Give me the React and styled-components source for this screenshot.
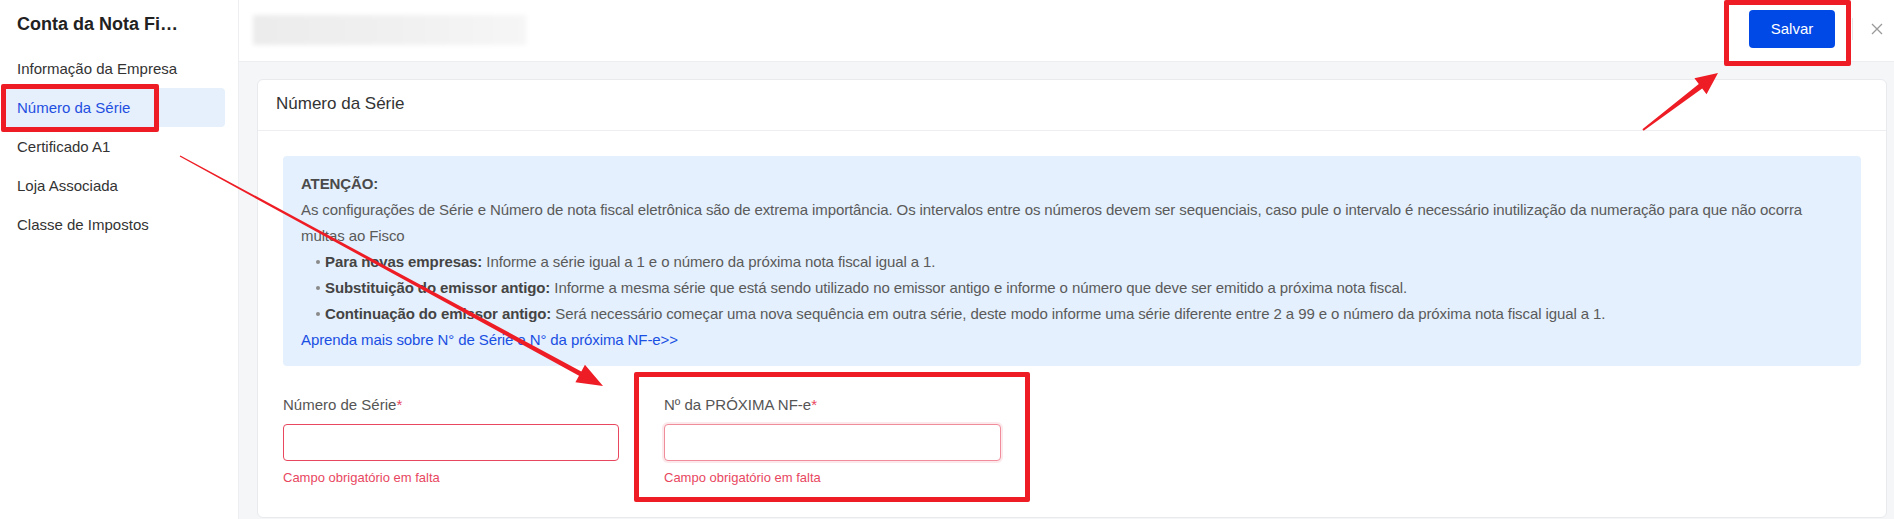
import React from "react";
import styled, { createGlobalStyle } from "styled-components";

const GlobalStyle = createGlobalStyle`
  * { box-sizing: border-box; }
  body {
    margin: 0;
    font-family: "Liberation Sans", Arial, sans-serif;
    background: #fff;
  }
`;

const menu = [
  "Informação da Empresa",
  "Número da Série",
  "Certificado A1",
  "Loja Associada",
  "Classe de Impostos",
];

const Page = styled.div`
  position: relative;
  display: flex;
  height: 519px;
  overflow: hidden;
`;

const Sidebar = styled.aside`
  width: 239px;
  flex: none;
  border-right: 1px solid #eceef1;
  background: #fff;
  padding: 0 13px 0 5px;
`;

const SideTitle = styled.h1`
  margin: 0;
  height: 49px;
  padding: 12px 0 0 12px;
  font-size: 18px;
  line-height: 24px;
  font-weight: bold;
  color: #222;
  white-space: nowrap;
`;

const MenuItem = styled.div`
  position: relative;
  height: 39px;
  display: flex;
  align-items: center;
  padding-left: 12px;
  font-size: 15px;
  border-radius: 4px;
  color: ${(p) => (p.$active ? "#1f4fe0" : "#333")};
  background: ${(p) => (p.$active ? "#e6f0fd" : "transparent")};
`;

const Main = styled.main`
  flex: 1;
  display: flex;
  flex-direction: column;
  background: #f5f6f8;
  min-width: 0;
`;

const TopBar = styled.header`
  height: 62px;
  flex: none;
  background: #fff;
  border-bottom: 1px solid #eceef1;
  display: flex;
  align-items: center;
  justify-content: space-between;
  padding: 0 11px 4px 14px;
`;

const BlurTitle = styled.div`
  width: 273px;
  height: 30px;
  margin-top: 3px;
  background: linear-gradient(90deg, #ececec, #f0f0f0 50%, #f6f6f6);
  filter: blur(2px);
`;

const Actions = styled.div`
  display: flex;
  align-items: center;
`;

const SaveButton = styled.button`
  position: relative;
  width: 86px;
  height: 38px;
  border: none;
  border-radius: 4px;
  background: #0149e6;
  color: #fff;
  font-family: inherit;
  font-size: 15px;
`;

const Divider = styled.span`
  width: 1px;
  height: 22px;
  background: #e6e6e6;
  margin: 0 18px 0 17px;
`;

const Close = styled.svg`
  width: 12px;
  height: 12px;
  display: block;
`;

const Content = styled.div`
  flex: 1;
  padding: 17px 7px 0 18px;
`;

const Card = styled.section`
  background: #fff;
  border: 1px solid #e8eaed;
  border-radius: 6px;
  height: 439px;
`;

const CardHead = styled.div`
  height: 51px;
  display: flex;
  align-items: center;
  padding: 0 18px 2px;
  border-bottom: 1px solid #eceef1;
  font-size: 17px;
  color: #333;
`;

const CardBody = styled.div`
  padding: 25px 25px 0;
`;

const Alert = styled.div`
  background: #e4f0fd;
  border-radius: 4px;
  padding: 15px 18px 13px;
  font-size: 15px;
  letter-spacing: -0.1px;
  line-height: 26px;
  color: #5a5a5a;
`;

const AlertTitle = styled.div`
  font-weight: bold;
  color: #4a4a4a;
`;

const Bullets = styled.ul`
  margin: 0;
  padding: 0;
  list-style: none;
`;

const Bullet = styled.li`
  position: relative;
  padding-left: 24px;
  &::before {
    content: "";
    position: absolute;
    left: 15px;
    top: 11px;
    width: 4px;
    height: 4px;
    border-radius: 50%;
    background: #8a8a8a;
  }
  b {
    color: #444;
  }
`;

const Link = styled.a`
  color: #1a4fe3;
  text-decoration: none;
`;

const Form = styled.div`
  display: grid;
  grid-template-columns: 336px 337px;
  column-gap: 45px;
  padding-top: 28px;
`;

const Field = styled.div`
  position: relative;
`;

const Label = styled.div`
  font-size: 15px;
  line-height: 22px;
  color: #555;
  margin-bottom: 8px;
  span {
    color: #e8475f;
  }
`;

const Input = styled.input`
  display: block;
  width: 100%;
  height: 37px;
  border: 1px solid ${(p) => (p.$focus ? "#f08c9c" : "#e8475f")};
  box-shadow: ${(p) => (p.$focus ? "0 0 0 2px rgba(232, 71, 95, 0.12)" : "none")};
  border-radius: 4px;
  outline: none;
  background: #fff;
`;

const Error = styled.div`
  font-size: 13px;
  line-height: 18px;
  margin-top: 8px;
  color: #e8475f;
`;

const Highlight = styled.span`
  position: absolute;
  inset: ${(p) => p.$inset};
  border: 5px solid #ee1d25;
  border-radius: 2px;
  pointer-events: none;
`;

const Arrows = styled.svg`
  position: absolute;
  left: 0;
  top: 0;
  pointer-events: none;
`;

function arrow(tail, tip, head, half, t0, t1) {
  const dx = tip[0] - tail[0];
  const dy = tip[1] - tail[1];
  const len = Math.hypot(dx, dy);
  const u = [dx / len, dy / len];
  const n = [-u[1], u[0]];
  const b = [tip[0] - head * u[0], tip[1] - head * u[1]];
  const p = (o, k) => `${o[0] + k * n[0]},${o[1] + k * n[1]}`;
  return [
    p(tail, -t0),
    p(b, -t1),
    p(b, -half),
    `${tip[0]},${tip[1]}`,
    p(b, half),
    p(b, t1),
    p(tail, t0),
  ].join(" ");
}

export default function App() {
  return (
    <>
      <GlobalStyle />
      <Page>
        <Sidebar>
          <SideTitle>Conta da Nota Fi…</SideTitle>
          {menu.map((m, i) => (
            <MenuItem key={m} $active={i === 1}>
              {m}
              {i === 1 && <Highlight $inset="-4px auto -5px -4px" style={{ width: 158 }} />}
            </MenuItem>
          ))}
        </Sidebar>
        <Main>
          <TopBar>
            <BlurTitle />
            <Actions>
              <SaveButton>
                Salvar
                <Highlight $inset="-10px -16px -18px -25px" />
              </SaveButton>
              <Divider />
              <Close viewBox="0 0 12 12">
                <path d="M1 1L11 11M11 1L1 11" stroke="#9a9a9a" strokeWidth="1.3" />
              </Close>
            </Actions>
          </TopBar>
          <Content>
            <Card>
              <CardHead>Número da Série</CardHead>
              <CardBody>
                <Alert>
                  <AlertTitle>ATENÇÃO:</AlertTitle>
                  <div>
                    As configurações de Série e Número de nota fiscal eletrônica são de extrema
                    importância. Os intervalos entre os números devem ser sequenciais, caso pule o
                    intervalo é necessário inutilização da numeração para que não ocorra multas ao
                    Fisco
                  </div>
                  <Bullets>
                    <Bullet>
                      <b>Para novas empresas:</b> Informe a série igual a 1 e o número da próxima
                      nota fiscal igual a 1.
                    </Bullet>
                    <Bullet>
                      <b>Substituição do emissor antigo:</b> Informe a mesma série que está sendo
                      utilizado no emissor antigo e informe o número que deve ser emitido a próxima
                      nota fiscal.
                    </Bullet>
                    <Bullet>
                      <b>Continuação do emissor antigo:</b> Será necessário começar uma nova
                      sequência em outra série, deste modo informe uma série diferente entre 2 a 99
                      e o número da próxima nota fiscal igual a 1.
                    </Bullet>
                  </Bullets>
                  <Link href="#">Aprenda mais sobre N° de Série e N° da próxima NF-e&gt;&gt;</Link>
                </Alert>
                <Form>
                  <Field>
                    <Label>
                      Número de Série<span>*</span>
                    </Label>
                    <Input />
                    <Error>Campo obrigatório em falta</Error>
                  </Field>
                  <Field>
                    <Label>
                      Nº da PRÓXIMA NF-e<span>*</span>
                    </Label>
                    <Input $focus />
                    <Error>Campo obrigatório em falta</Error>
                    <Highlight $inset="-22px -29px -15px -30px" />
                  </Field>
                </Form>
              </CardBody>
            </Card>
          </Content>
        </Main>
        <Arrows width="1894" height="519" viewBox="0 0 1894 519">
          <polygon points={arrow([180, 156], [603, 386], 26, 10, 0.7, 2.4)} fill="#ee1d25" />
          <polygon points={arrow([1643, 130], [1718, 73], 22, 10, 1, 2.8)} fill="#ee1d25" />
        </Arrows>
      </Page>
    </>
  );
}
